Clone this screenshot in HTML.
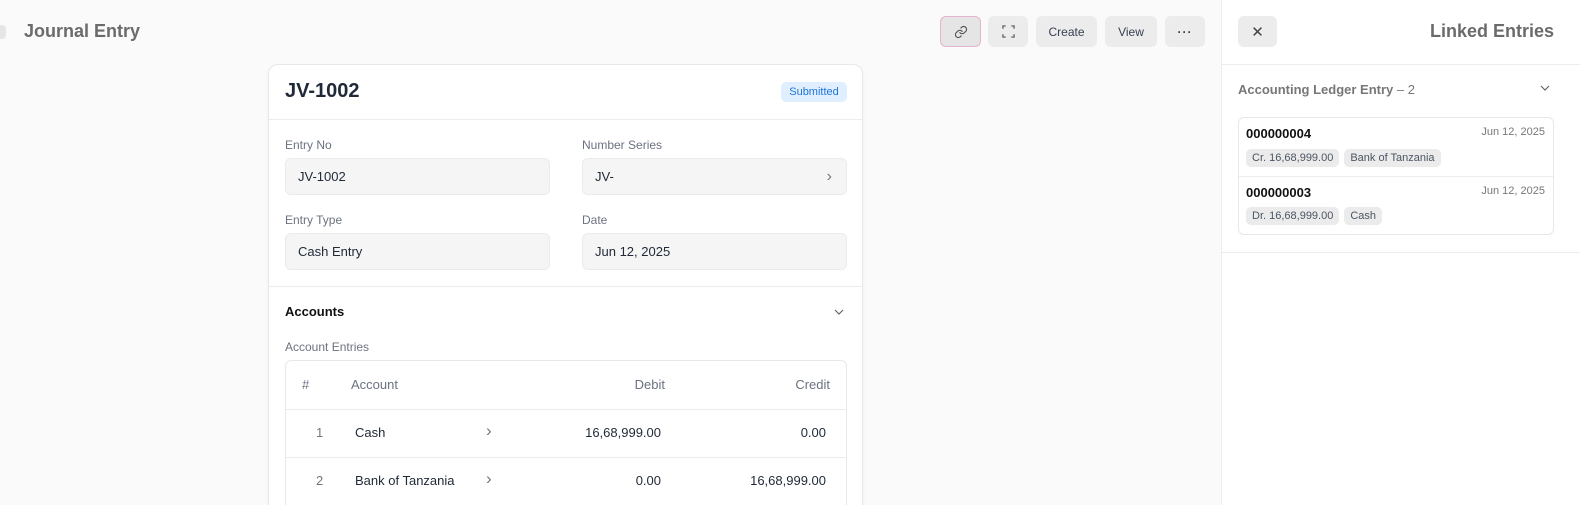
<!DOCTYPE html>
<html><head><style>
*{box-sizing:border-box;margin:0;padding:0}
html,body{width:1580px;height:505px;overflow:hidden}
body{background:#fafafa;font-family:"Liberation Sans",sans-serif;position:relative;color:#1f2937}
.a{position:absolute}
.btn{position:absolute;top:16px;height:31px;background:#ececec;border-radius:6px;font-size:12px;color:#374151;display:flex;align-items:center;justify-content:center}
.lbl{position:absolute;font-size:12px;color:#6b7280}
.inp{position:absolute;height:37px;background:#f5f5f5;border:1px solid #ebebeb;border-radius:6px;font-size:13px;color:#1f2937;padding-left:12px;display:flex;align-items:center}
.pill{display:inline-block;background:#ebebeb;border-radius:5px;font-size:11px;color:#4b5563;padding:3px 6px;margin-right:5px}
</style></head><body>
<div class="a" style="left:0;top:0;width:1580px;height:505px;overflow:hidden">
<div class="a" style="left:-6px;top:25px;width:12px;height:14px;background:#e5e5e5;border-radius:4px"></div>
<div class="a" style="left:24px;top:21px;font-size:18px;font-weight:bold;color:#6b6b6b">Journal Entry</div>

<div class="btn" style="left:940px;width:41px;border:1px solid #e4b4cf;background:#e5e5e5">
<svg width="14" height="14" viewBox="0 0 24 24" fill="none" stroke="#555" stroke-width="2" stroke-linecap="round"><path d="M10 13a5 5 0 0 0 7.5.5l3-3a5 5 0 0 0-7-7l-1.7 1.7"/><path d="M14 11a5 5 0 0 0-7.5-.5l-3 3a5 5 0 0 0 7 7l1.7-1.7"/></svg></div>
<div class="btn" style="left:988px;width:40px"><svg width="13" height="13" viewBox="0 0 14 14" fill="none" stroke="#555" stroke-width="1.3"><path d="M1 4V1h3M10 1h3v3M13 10v3h-3M4 13H1v-3"/></svg></div>
<div class="btn" style="left:1036px;width:61px">Create</div>
<div class="btn" style="left:1105px;width:52px">View</div>
<div class="btn" style="left:1165px;width:40px;font-weight:bold;letter-spacing:1px">···</div>

<div class="a" style="left:268px;top:64px;width:595px;height:441px;background:#fff;border:1px solid #e8e8e8;border-bottom:none;border-radius:10px 10px 0 0;box-shadow:0 1px 3px rgba(0,0,0,.05)"></div>
<div class="a" style="left:285px;top:80px;font-size:20px;font-weight:bold;color:#1f2937">JV-1002</div>
<div class="a" style="left:781px;top:82px;width:66px;height:20px;background:#e0efff;border-radius:5px;color:#1f74d6;font-size:11px;display:flex;align-items:center;justify-content:center">Submitted</div>
<div class="a" style="left:269px;top:119px;width:593px;height:1px;background:#ececec"></div>
<div class="lbl" style="left:285px;top:138px">Entry No</div>
<div class="inp" style="left:285px;top:158px;width:265px">JV-1002</div>
<div class="lbl" style="left:582px;top:138px">Number Series</div>
<div class="inp" style="left:582px;top:158px;width:265px">JV-<span class="a" style="right:14px;color:#777;font-size:16px">›</span></div>
<div class="lbl" style="left:285px;top:213px">Entry Type</div>
<div class="inp" style="left:285px;top:233px;width:265px">Cash Entry</div>
<div class="lbl" style="left:582px;top:213px">Date</div>
<div class="inp" style="left:582px;top:233px;width:265px">Jun 12, 2025</div>
<div class="a" style="left:269px;top:286px;width:593px;height:1px;background:#ececec"></div>
<div class="a" style="left:285px;top:304px;font-size:13px;font-weight:bold;color:#111">Accounts</div>
<svg class="a" style="left:833px;top:307px" width="12" height="10" viewBox="0 0 12 10" fill="none" stroke="#666" stroke-width="1.2"><path d="M2 3l4 4 4-4"/></svg>
<div class="lbl" style="left:285px;top:340px">Account Entries</div>
<div class="a" style="left:285px;top:360px;width:562px;height:145px;border:1px solid #e8e8e8;border-bottom:none;border-radius:6px 6px 0 0"></div>
<div class="a" style="left:286px;top:409px;width:560px;height:1px;background:#ececec"></div>
<div class="a" style="left:286px;top:457px;width:560px;height:1px;background:#ececec"></div>
<div class="lbl" style="left:302px;top:377px;font-size:13px">#</div>
<div class="lbl" style="left:351px;top:377px;font-size:13px">Account</div>
<div class="lbl" style="left:600px;top:377px;width:65px;text-align:right;font-size:13px">Debit</div>
<div class="lbl" style="left:760px;top:377px;width:70px;text-align:right;font-size:13px">Credit</div>
<div class="a" style="left:316px;top:425px;font-size:13px;color:#777">1</div>
<div class="a" style="left:355px;top:425px;font-size:13px">Cash</div>
<div class="a" style="left:486px;top:421px;font-size:17px;color:#777">›</div>
<div class="a" style="left:560px;top:425px;width:101px;text-align:right;font-size:13px">16,68,999.00</div>
<div class="a" style="left:730px;top:425px;width:96px;text-align:right;font-size:13px">0.00</div>
<div class="a" style="left:316px;top:473px;font-size:13px;color:#777">2</div>
<div class="a" style="left:355px;top:473px;font-size:13px">Bank of Tanzania</div>
<div class="a" style="left:486px;top:469px;font-size:17px;color:#777">›</div>
<div class="a" style="left:560px;top:473px;width:101px;text-align:right;font-size:13px">0.00</div>
<div class="a" style="left:730px;top:473px;width:96px;text-align:right;font-size:13px">16,68,999.00</div>

<div class="a" style="left:1221px;top:0;width:359px;height:505px;background:#fff;border-left:1px solid #ececec"></div>
<div class="btn" style="left:1238px;width:39px;font-size:15px;color:#444">✕</div>
<div class="a" style="left:1400px;top:21px;width:154px;text-align:right;font-size:18px;font-weight:bold;color:#6b6b6b">Linked Entries</div>
<div class="a" style="left:1222px;top:64px;width:358px;height:1px;background:#ececec"></div>
<div class="a" style="left:1238px;top:82px;font-size:13px;font-weight:bold;color:#777">Accounting Ledger Entry <span style="font-weight:normal">– 2</span></div>
<svg class="a" style="left:1539px;top:83px" width="12" height="10" viewBox="0 0 12 10" fill="none" stroke="#666" stroke-width="1.2"><path d="M2 3l4 4 4-4"/></svg>
<div class="a" style="left:1238px;top:117px;width:316px;height:118px;border:1px solid #e8e8e8;border-radius:6px"></div>
<div class="a" style="left:1239px;top:176px;width:314px;height:1px;background:#ececec"></div>
<div class="a" style="left:1246px;top:126px;font-size:13px;font-weight:bold;color:#111">000000004</div>
<div class="a" style="left:1440px;top:126px;width:105px;text-align:right;font-size:11px;color:#777">Jun 12, 2025</div>
<div class="a" style="left:1246px;top:148px"><span class="pill">Cr. 16,68,999.00</span><span class="pill">Bank of Tanzania</span></div>
<div class="a" style="left:1246px;top:185px;font-size:13px;font-weight:bold;color:#111">000000003</div>
<div class="a" style="left:1440px;top:185px;width:105px;text-align:right;font-size:11px;color:#777">Jun 12, 2025</div>
<div class="a" style="left:1246px;top:206px"><span class="pill">Dr. 16,68,999.00</span><span class="pill">Cash</span></div>
<div class="a" style="left:1222px;top:252px;width:358px;height:1px;background:#ececec"></div>
</div>
</body></html>
